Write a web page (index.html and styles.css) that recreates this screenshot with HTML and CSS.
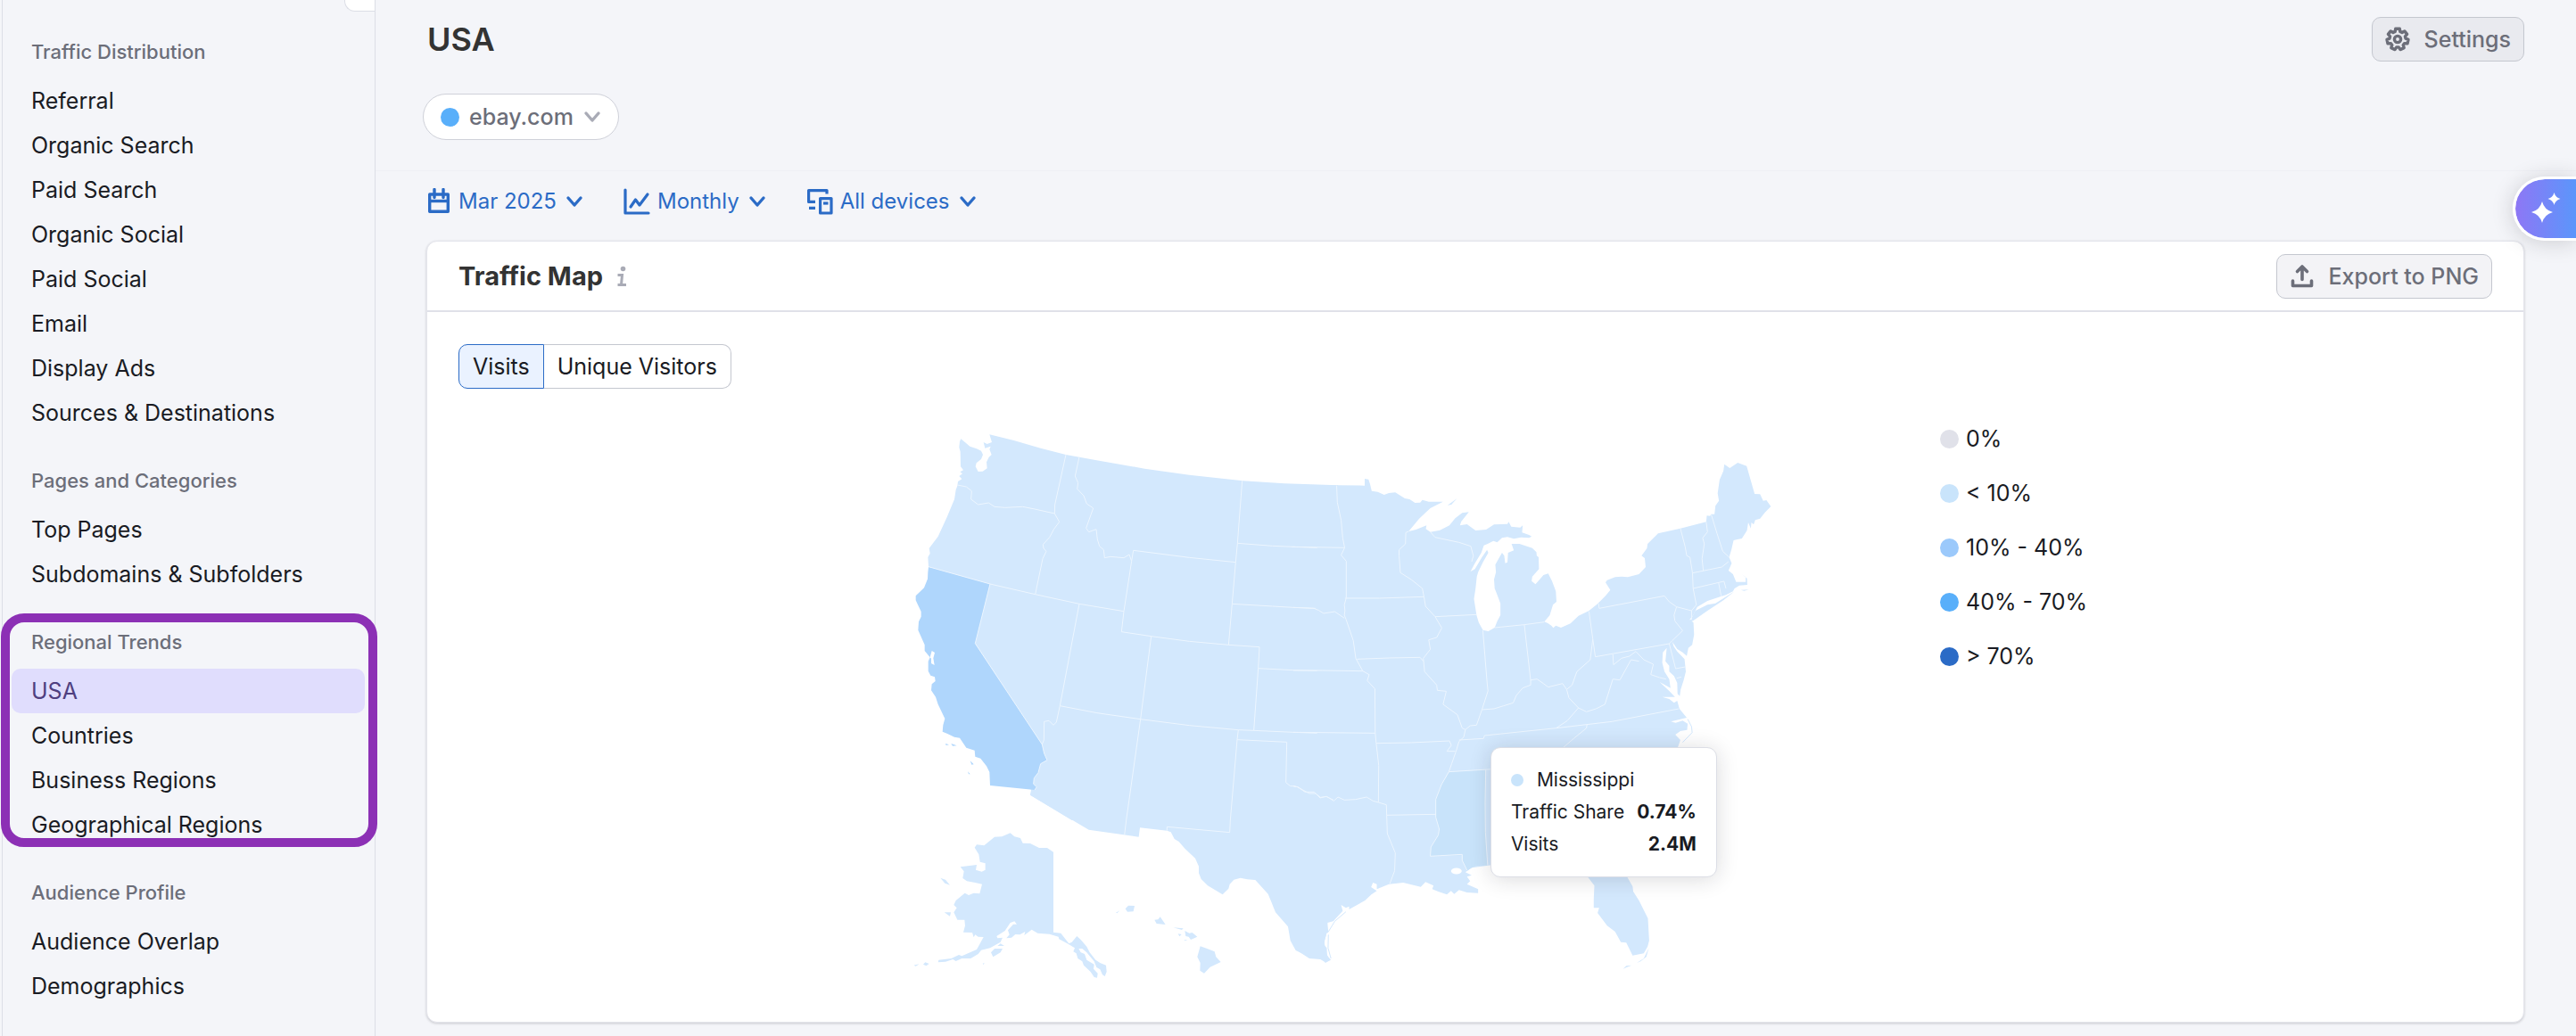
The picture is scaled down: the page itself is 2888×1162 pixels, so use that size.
FILE: index.html
```html
<!DOCTYPE html>
<html lang="en">
<head>
<meta charset="utf-8">
<title>USA – Regional Trends</title>
<link rel="stylesheet" href="styles.css">
</head>
<body>
<div class="app">
  <nav class="sidebar" aria-label="Reports">
    <button class="collapse" type="button" aria-label="Collapse menu"></button>
    <section class="group">
      <h2>Traffic Distribution</h2>
      <a href="#">Referral</a>
      <a href="#">Organic Search</a>
      <a href="#">Paid Search</a>
      <a href="#">Organic Social</a>
      <a href="#">Paid Social</a>
      <a href="#">Email</a>
      <a href="#">Display Ads</a>
      <a href="#">Sources &amp; Destinations</a>
    </section>
    <section class="group">
      <h2>Pages and Categories</h2>
      <a href="#">Top Pages</a>
      <a href="#">Subdomains &amp; Subfolders</a>
    </section>
    <section class="group highlighted">
      <h2>Regional Trends</h2>
      <a href="#" class="active" aria-current="page">USA</a>
      <a href="#">Countries</a>
      <a href="#">Business Regions</a>
      <a href="#">Geographical Regions</a>
    </section>
    <section class="group">
      <h2>Audience Profile</h2>
      <a href="#">Audience Overlap</a>
      <a href="#">Demographics</a>
    </section>
  </nav>

  <main class="main">
    <header class="top">
      <h1>USA</h1>
      <button class="btn btn-settings" type="button">
        <svg class="icon" viewBox="-14 -14 28 28" width="28" height="28" fill="none" stroke="currentColor" stroke-width="3.4" stroke-linejoin="round"><path d="M-2.8-8.6-2.3-11.8 2.3-11.8 2.8-8.6 5-7.5 7.8-9.1 10.6-5.6 8.4-3.2 9-.8 12 .4 11 4.9 7.7 4.6 6.2 6.5 7.2 9.6 3 11.6 1.2 8.9-1.2 8.9-3 11.6-7.2 9.6-6.2 6.5-7.7 4.6-11 4.9-12 .4-9-.8-8.4-3.2-10.6-5.6-7.8-9.1-5-7.5Z"/><circle r="3.6"/></svg>
        <span>Settings</span>
      </button>
    </header>

    <div class="domains">
      <button class="pill" type="button">
        <span class="dot dot-40"></span>
        <span>ebay.com</span>
        <svg class="chevron" viewBox="0 0 20 14" width="20" height="14"><path d="M3 3l7 8 7-8"/></svg>
      </button>
    </div>

    <div class="filters">
      <button class="filter" type="button">
        <svg viewBox="0 0 28 30" width="28" height="30" fill="none" stroke="currentColor" stroke-width="3.4"><path d="M3.7 7h20.600v19.300H3.700Z" stroke-linejoin="round"/><path d="M3 14.500h22"/><path d="M9 1.500v9M19 1.500v9" stroke-linecap="round"/></svg>
        <span>Mar 2025</span>
        <svg class="chevron" viewBox="0 0 20 14" width="20" height="14"><path d="M3 3l7 8 7-8"/></svg>
      </button>
      <button class="filter" type="button">
        <svg viewBox="0 0 30 30" width="30" height="30" fill="none" stroke="currentColor" stroke-width="3.200" stroke-linecap="round" stroke-linejoin="round"><path d="M2 2v26h26"/><path d="M8 21l5.500-8 4.500 6 9-12"/></svg>
        <span>Monthly</span>
        <svg class="chevron" viewBox="0 0 20 14" width="20" height="14"><path d="M3 3l7 8 7-8"/></svg>
      </button>
      <button class="filter" type="button">
        <svg viewBox="0 0 30 30" width="30" height="30" fill="none" stroke="currentColor" stroke-width="3.200"><path d="M23 6.500V2.600H2.600V15.400H10M3 22.400H10" stroke-linejoin="round"/><path d="M15.600 11.600h12.400v16.400H15.600Z" stroke-linejoin="round"/><path d="M19 17h5.500"/></svg>
        <span>All devices</span>
        <svg class="chevron" viewBox="0 0 20 14" width="20" height="14"><path d="M3 3l7 8 7-8"/></svg>
      </button>
    </div>

    <section class="card">
      <header class="card-head">
        <h2>Traffic Map</h2>
        <svg class="info" viewBox="0 0 12 24" width="12" height="24" fill="none" stroke="currentColor" stroke-width="3"><circle cx="7.500" cy="3.500" r="2.800" fill="currentColor" stroke="none"/><path d="M1.500 10.500H6.500L5.500 21.500M1.500 21.500H11"/></svg>
        <button class="btn btn-export" type="button">
          <svg class="icon" viewBox="0 0 28 28" width="28" height="28" fill="none" stroke="currentColor" stroke-width="3.600" stroke-linejoin="round" stroke-linecap="round"><path d="M3.500 19v5.500h21V19"/><path d="M14 17.500V4M8.500 8.500L14 3l5.500 5.500"/></svg>
          <span>Export to PNG</span>
        </button>
      </header>
      <div class="tabs">
        <button class="tab selected" type="button" aria-pressed="true">Visits</button>
        <button class="tab" type="button" aria-pressed="false">Unique Visitors</button>
      </div>
      <div class="map-row">
        <div class="map">
          <svg viewBox="1025 476 964 624" role="img" aria-label="Traffic by state">
            <g class="land">
              <path transform="translate(1000 460) scale(.33333)" d="M232 97L250 112 262 122 285 130 300 137 306 150 300 165 284 178 281 190 290 207 305 206 320 196 318 175 326 158 335 150 328 132 332 122 313 128 308 108 320 114 336 108 328 82 410 102 500 128 585 150 680 167 850 197 1000 218 1180 238 1320 247 1500 253V1380H605L465 1295 468 1278 200 800V560L123 527 121 495 128 482 125 465 155 425 185 360 210 300 215 268 220 255 222 240 235 232 226 222 237 214 229 208 240 202 231 190 230 140 226 125 228 105Z"/>
              <path transform="translate(1450 460) scale(.35714 .33333)" d="M0 251L224 254V231L236 233 241 250 246 272 265 275 285 285 300 279 320 277 350 297 365 300 382 312 398 311 405 302 425 308 470 308 430 330 395 365 362 408 385 402 418 388 416 400 430 410 460 404 490 388 508 364 530 346 551 343 527 375 523 388 545 384 572 405 605 402 630 385 672 383 676 376 684 392 712 395 720 388 718 412 740 420 748 425 740 430 715 428 692 433 672 427 655 430 640 445 628 440 610 450 598 455 590 480 570 515 556 543 570 535 592 495 608 470 612 480 596 510 580 545 576 560 572 600 567 635 575 690 582 715 595 740 612 744 632 732 640 710 650 690V650L640 622 632 600 630 570 636 545 634 520 655 480 662 490 665 515 672 512 674 480 692 472 685 450 710 450 750 464 763 478 764 490 770 495 771 535 750 560 748 575 760 586 775 568 785 555 800 550 812 575 824 610 826 645 815 655 805 690 788 712 800 718 810 725 816 733 824 725 840 732 870 718 895 692 928 675 955 652 980 625 995 605 980 580 985 572 1010 562 1030 560 1050 562 1085 552 1106 528 1103 498 1093 490 1110 465 1112 450 1145 415 1215 398 1296 376 1298 355 1308 356 1311 350 1322 350 1325 322 1336 305 1332 280 1338 235 1350 205 1353 182 1370 195 1395 177 1423 188 1448 282 1465 283 1475 305 1485 303 1499 324 1480 345 1465 365 1450 370 1445 385 1438 378 1436 398 1428 378 1424 405 1408 432 1394 435 1382 438 1375 470 1368 495 1376 515 1366 540 1380 552 1390 578 1420 578 1420 562 1408 553 1424 566 1425 588 1400 590 1385 600 1380 610 1358 622 1340 628 1300 642 1268 662 1255 690 1244 705 1256 715 1258 755 1252 790 1240 800 1235 827 1222 815 1205 804 1190 780 1194 795 1205 812 1228 838 1232 880 1225 910 1216 940 1213 962 1206 955 1205 918 1195 895 1180 880 1180 860 1168 845 1172 800 1160 815 1158 850 1165 880 1180 905 1184 935 1150 915 1180 945 1198 965 1158 965 1180 972 1195 985 1205 978 1212 1005 1235 1035 1185 1048 1200 1052 1222 1045 1238 1055 1236 1076 1215 1080 1199 1092 1215 1110 1205 1140 1000 1380H0Z"/>
              <path transform="translate(1450 460) scale(.35714 .33333)" d="M484 320L514 297 496 318ZM1250 700L1262 675 1300 655 1325 650 1385 610 1350 640 1300 675 1256 708 1242 714ZM1405 605L1430 604 1415 608Z"/>
              <path transform="translate(1000 860) scale(.33333)" d="M465 95L662 212 830 236 834 205 925 215 938 220 950 243 965 252 985 275 1020 308 1032 335 1032 358 1040 378 1062 400 1112 430 1132 410 1136 395 1150 380 1172 374 1195 379 1222 381 1265 428 1278 460 1290 490 1332 538 1340 585 1358 618 1410 643 1445 645 1458 660 1472 652 1460 625 1454 590 1462 560 1465 520 1485 518 1500 500V0H495L476 60Z"/>
              <path transform="translate(1450 800) scale(.35714 .33333)" d="M0 780L15 800 50 825 85 828 100 838 118 830 106 815 105 790 97 780 98 765 103 745 92 744 110 738 107 705 125 700 155 665 150 645 165 655 175 650 175 660 225 630 245 610 262 598 244 585 250 570 262 575 262 592 300 575 345 570 400 584 415 568 440 580 436 592 455 600 482 610 495 598 505 608 520 595 545 603 580 605 580 592 545 575 555 565 545 550 560 545 540 535 560 520 612 512 640 508V0H0ZM920 545L945 580 943 625 943 655 960 655 955 672 985 715 1010 735 1028 770 1045 772 1065 815 1100 808 1112 785 1117 765 1113 690 1085 630 1067 600 1065 583 1045 545ZM1035 860L1045 850 1062 848 1046 855ZM1078 840L1100 825 1116 790 1108 820 1090 835Z"/>
              <path transform="translate(1000 860) scale(.33333)" d="M398 223L412 235 432 240 440 257 465 258 495 273 522 273 543 287V557L568 560 595 595 605 590 622 570 635 582 655 605 665 625 685 650 700 660 720 668 722 690 716 705 708 700 700 682 688 675 680 655 655 625 640 612 628 612 635 625 648 630 655 650 680 665 678 680 692 695 690 710 680 708 668 690 645 668 640 655 625 645 620 628 610 622 615 610 590 595 562 580 560 572 530 563 490 560 470 548 445 567 448 555 430 565 415 564 402 575 385 577 395 565 390 550 408 530 420 530 412 520 398 525 380 552 352 570 355 577 372 575 365 590 330 610 300 617 290 630 265 645 235 645 215 654 205 648 180 656 155 658 157 650 200 645 225 633 235 637 285 615 295 597 308 573 290 572 280 565 275 574 270 558 240 557 246 535 244 515 220 515 208 490 218 475 208 465 215 450 245 425 258 432 275 425 295 427 303 395 280 390 252 385 238 375 242 352 230 337 285 330 282 347 302 353 314 347 314 325 296 320 292 295 278 272 285 262 310 265 345 236 370 235ZM163 374L180 380 195 398 178 392ZM176 490L198 490 195 503ZM333 625L345 612 372 612 365 625 340 640ZM355 603L365 595 378 603ZM73 668L92 664 80 671ZM105 665L112 658 125 663 115 670ZM305 662L311 660 308 666ZM785 478L795 467 816 468 812 487 792 488ZM753 491L766 484 757 493ZM883 515L895 514 902 505 920 531 890 528ZM946 541L980 544 975 549ZM985 552L1000 560 1010 558 1027 572 1005 582 998 572 988 570ZM962 562L974 564 967 571ZM982 583L994 583 986 586ZM1037 604L1060 612 1085 622 1090 640 1106 657 1070 674 1050 695 1036 686 1037 660 1027 640Z"/>
            </g>
            <g class="water">
              <ellipse cx="1632.800" cy="977" rx="6" ry="3.500"/>
            </g>
            <path class="mid" transform="translate(1000 460) scale(.33333)" d="M123 527L330 585 280 785 505 1125 512 1155 522 1178 500 1190 492 1220 478 1238 476 1258 487 1268 480 1278 330 1263 328 1218 318 1198 298 1172 280 1166 278 1145 250 1136 228 1103 210 1100 185 1088 170 1082 172 1060 178 1038 155 990 147 965 132 943 134 922 146 912 144 898 130 893 122 878 122 845 128 832 110 810V790L88 740 90 712 98 695V678L80 640V625L108 598 120 568 121 545ZM180 1122L192 1126 182 1128ZM199 1122L218 1129 204 1130ZM263 1180L275 1192 268 1193ZM255 1216L263 1225 258 1225Z"/>
            <path class="water" transform="translate(1000 460) scale(.33333)" d="M128 832L134 810 144 816 139 835 143 858 132 852 132 836Z"/>
            <path class="hover" transform="translate(1450 800) scale(.35714 .33333)" d="M490 197L604 190 602 300 603 400 610 512 575 513 560 520 545 530 530 495V478L430 481 432 450 455 410 458 390 447 350 447 290 465 240Z"/>
            <g class="borders">
              <path transform="translate(1000 460) scale(.33333)" d="M585 150L548 318 547 348M630 157L616 222 626 245 623 265 645 288 655 315 677 330 653 397 662 410 687 401 691 435 698 458 712 470 715 497 735 493 780 497 798 486 806 508M220 252L250 258 268 272 266 300 290 318 325 312 345 325 380 328 440 325 480 333 547 348 563 376 545 400 530 428 508 452 510 465 519 475 507 500 482 620M123 527L330 585 482 620 630 652 780 677M330 585L280 785 505 1125 512 1155 522 1178 500 1190 492 1220 478 1238 476 1258 487 1268 480 1278M630 652L565 995 553 1050 543 1060 528 1045 512 1048 511 1110 505 1125M812 472L806 508 780 677 772 746 872 761 836 1040 788 1380M812 472L1000 496 1156 512M1178 238L1162 448 1156 512 1144 652 1132 790M872 761L1000 778 1132 790 1236 797 1232 869 1217 1078M1162 448L1280 457 1350 460M1144 652L1280 660 1350 664M1232 869L1350 875M565 995L690 1019 836 1040 1000 1061 1165 1076 1217 1078 1350 1084M1165 1076L1161 1109 1138 1380M1161 1109L1328 1117 1325 1253 1340 1265 1350 1265"/>
              <path transform="translate(1450 460) scale(.35714 .33333)" d="M136 254L138 310 150 370 155 430 161 463 150 488 166 508V632M0 460L161 463M162 633H270L410 628M362 408L353 412 352 450 332 470V490L336 547 370 570 405 600 410 628M166 632L160 655 162 675 160 690 165 703 188 775 196 835 218 878 238 890 232 910 256 938 257 1086 260 1120 268 1195 267 1320M0 664L65 667 80 674 95 684 130 678 160 700M410 628L415 660 445 695 466 733 450 765 425 773 430 805 408 835 412 880 450 925 452 943 480 946 470 990 515 1025 530 1070 540 1075 535 1100 520 1115 510 1150 497 1190 488 1217M445 695L575 688M200 838L300 834 398 832 408 845M0 876L90 876 218 878M0 1084L257 1087M260 1121L370 1119 490 1113 496 1128 482 1148H508M430 410L445 428 520 445 557 458 565 490 560 510M595 742L608 915 611 945 592 1008M632 732L725 722 788 713M725 722L745 910M540 1075L555 1062 575 1060 592 1008 630 1005 660 995 690 985 700 960 720 935 745 925V908L765 905 785 920 800 932 845 920 858 940 875 925 890 880 932 840 940 770 928 677M940 770L948 830 1180 786 1190 775 1222 742 1198 710 1195 690 1203 662 1250 675M958 650L960 667 1165 625 1180 645 1203 662M858 940L865 968 895 1002 920 1015 950 1005 978 990 1003 905 1025 908 1060 840 1085 845M1003 822L1005 857 1030 835 1055 828 1075 812 1100 840 1130 855 1122 890 1150 900 1170 905M895 1002L860 1045 825 1070 600 1095 597 1105 520 1110M825 1070L1000 1048 1210 1005M922 1057L920 1070 880 1105 840 1142M488 1217L626 1208M1180 786L1200 870 1230 864M1203 902L1218 898M1215 398L1230 460 1235 490 1245 495 1253 548 1255 600 1265 655 1250 675V705M1296 376L1300 410 1285 430 1290 450 1283 500 1287 541M1312 352L1330 415 1348 475 1368 495M1253 548L1345 528 1366 510M1255 600L1352 576 1358 600M1335 581L1343 626"/>
              <path transform="translate(1000 860) scale(.33333)" d="M788 180L782 230M1138 180L1136 221 925 202V215"/>
              <path transform="translate(1450 800) scale(.35714 .33333)" d="M0 245L12 248 25 255 50 270 70 270 85 283 105 280 127 295 140 282 160 292 195 290 230 282 250 295 267 300 292 308 293 343 447 340M293 343L295 405 320 470 318 530 303 573M604 190L602 300 603 400 610 512M488 197L465 240 447 290V350L458 390 455 410 432 450 430 481 530 475V495L545 528"/>
              <path transform="translate(1000 460) scale(.33333)" d="M1345 460L1355 460M1350 1265L1365 1268 1390 1285"/>
            </g>
            <path class="banks" transform="translate(1450 460) scale(.35714 .33333)" d="M1238 1040L1250 1065 1252 1085 1222 1118"/>
            <path class="banks" transform="translate(1450 800) scale(.35714 .33333)" d="M110 735L130 700 165 668M110 745L109 790 118 825"/>
            <path class="border-line" transform="translate(1000 460) scale(.33333)" d="M1350 460L1430 463M1350 664L1425 667M1350 875L1430 877M1350 1084L1430 1087M1350 1265L1365 1268 1390 1285 1420 1285 1440 1305 1460 1300 1485 1312"/>
          </svg>
          <div class="tooltip" role="tooltip">
            <p class="tip-title"><span class="dot dot-tip"></span>Mississippi</p>
            <p class="tip-line"><span>Traffic Share</span><strong>0.74%</strong></p>
            <p class="tip-line"><span>Visits</span><strong>2.4M</strong></p>
          </div>
        </div>
        <ul class="legend">
          <li><span class="dot dot-0"></span>0%</li>
          <li><span class="dot dot-1"></span>&lt; 10%</li>
          <li><span class="dot dot-10"></span>10% - 40%</li>
          <li><span class="dot dot-40"></span>40% - 70%</li>
          <li><span class="dot dot-70"></span>&gt; 70%</li>
        </ul>
      </div>
    </section>
  </main>
</div>
<button class="assistant" type="button" aria-label="Open assistant">
  <svg viewBox="0 0 36 36" width="36" height="36" fill="#fff"><path d="M13 10Q15.500 19.500 25 22 15.500 24.500 13 34 10.500 24.500 1 22 10.500 19.500 13 10ZM26.500 0Q28 5.500 33.500 7 28 8.500 26.500 14 25 8.500 19.500 7 25 5.500 26.500 0Z"/></svg>
</button>
</body>
</html>
```
FILE: styles.css
```css
* {
  box-sizing: border-box;
}

body {
  margin: 0;
  background: #f4f5f9;
  color: #191b23;
  font-family: Inter, "Liberation Sans", sans-serif;
  font-size: 25px;
  line-height: 32px;
}

h1, h2, p, ul {
  margin: 0;
  padding: 0;
}

button {
  margin: 0;
  font: inherit;
  color: inherit;
  cursor: pointer;
}

svg {
  display: block;
  flex: none;
}

.app {
  display: flex;
  min-height: 100vh;
}

/* Sidebar */

.sidebar {
  position: relative;
  flex: none;
  display: flex;
  flex-direction: column;
  gap: 36px;
  width: 419px;
  margin-left: 2px;
  padding: 43px 11px 30px 10px;
  border-left: 1px solid #dcdee6;
  border-right: 1px solid #dcdee6;
}

.collapse {
  position: absolute;
  top: -40px;
  right: 0;
  width: 34px;
  height: 53px;
  padding: 0;
  background: #fff;
  border: 1px solid #dcdee6;
  border-right: 0;
  border-radius: 12px 0 0 12px;
}

.group {
  position: relative;
  display: flex;
  flex-direction: column;
}

.group h2 {
  margin-bottom: 15px;
  padding: 0 22px;
  font-size: 22px;
  line-height: 30px;
  font-weight: 500;
  color: #6c6e79;
}

.group a {
  height: 50px;
  padding: 0 22px;
  border-radius: 10px;
  line-height: 50px;
  color: #191b23;
  text-decoration: none;
}

.group .active {
  background: #e0ddfd;
  color: #4f3f80;
}

.highlighted::after {
  content: "";
  position: absolute;
  inset: -17px -14px 0 -12px;
  border: 10px solid #8c30b5;
  border-radius: 26px;
  pointer-events: none;
}

/* Main column */

.main {
  flex: 1;
  min-width: 0;
}

.top {
  display: flex;
  align-items: center;
  justify-content: space-between;
  padding: 19px 58px 0;
}

.top h1 {
  font-size: 36px;
  line-height: 44px;
  font-weight: 600;
  color: #333;
}

.btn {
  display: flex;
  align-items: center;
  gap: 16px;
  height: 50px;
  padding: 0 14px;
  background: #f3f3f6;
  border: 1px solid #c4c7cf;
  border-radius: 10px;
  font-weight: 500;
  color: #6c6e79;
}

.btn-settings {
  background: #e9eaef;
}

.domains {
  padding: 36px 53px 34px;
  border-bottom: 1px solid #eff0f5;
}

.pill {
  display: flex;
  align-items: center;
  gap: 11px;
  height: 52px;
  padding: 0 19px;
  background: #fff;
  border: 1px solid #cfd1d9;
  border-radius: 26px;
  font-weight: 500;
  color: #6c6e79;
}

.chevron {
  fill: none;
  stroke: currentColor;
  stroke-width: 3.4;
  stroke-linecap: round;
  stroke-linejoin: round;
}

.pill .chevron {
  color: #a9abb6;
}

.dot {
  flex: none;
  width: 21px;
  height: 21px;
  border-radius: 50%;
}

.dot-0 { background: #e0e1e9; }
.dot-1 { background: #c9e4fb; }
.dot-10 { background: #9bc9fb; }
.dot-40 { background: #59affa; }
.dot-70 { background: #2b6bc6; }

.filters {
  display: flex;
  gap: 45px;
  height: 68px;
  padding: 0 57px;
  font-size: 24px;
}

.filter {
  display: flex;
  align-items: center;
  gap: 8px;
  padding: 0;
  background: none;
  border: 0;
  color: #2b6bc6;
}

.filter .chevron {
  margin-left: 2px;
}

/* Traffic map card */

.card {
  margin: 10px 58px 16px 57px;
  background: #fff;
  border: 1px solid #e4e5ec;
  border-radius: 12px;
  box-shadow: 0 1px 3px rgba(25, 27, 35, .2);
}

.card-head {
  display: flex;
  align-items: center;
  height: 79px;
  padding: 0 35px;
  border-bottom: 2px solid #e0e1e9;
}

.card-head h2 {
  font-size: 29px;
  line-height: 36px;
  font-weight: 700;
  color: #333;
}

.info {
  margin-left: 15px;
  color: #a9abb6;
}

.btn-export {
  margin-left: auto;
}

.tabs {
  display: flex;
  margin: 36px 35px 40px;
}

.tab {
  height: 50px;
  padding: 0 15px;
  background: #fff;
  border: 1px solid #c4c7cf;
  border-left: 0;
  border-radius: 0 10px 10px 0;
}

.tab.selected {
  background: #eaf2ff;
  border: 1px solid #2b6bc6;
  border-radius: 10px 0 0 10px;
}

.map-row {
  display: grid;
  grid-template-columns: 546fr 964fr 186fr 654fr;
  padding-bottom: 46px;
}

.map {
  grid-column: 2;
  position: relative;
}

.map > svg {
  width: 100%;
}

.land { fill: #d3e8fd; }
.mid { fill: #afd6fc; }
.hover { fill: #c8e3fa; }
.water { fill: #fff; }

.borders path,
.border-line {
  fill: none;
  stroke: #edf6ff;
  stroke-width: 1px;
  vector-effect: non-scaling-stroke;
}

.banks {
  fill: none;
  stroke: #d3e8fd;
  stroke-width: 1px;
  vector-effect: non-scaling-stroke;
}

.tooltip {
  position: absolute;
  left: 67%;
  top: 58%;
  width: 254px;
  padding: 18px 22px;
  background: #fff;
  border: 1px solid #dcdee6;
  border-radius: 11px;
  box-shadow: 0 2px 24px rgba(25, 27, 35, .16);
  font-size: 21px;
  line-height: 36px;
}

.tip-title {
  display: flex;
  align-items: center;
  gap: 15px;
}

.tip-line {
  display: flex;
  justify-content: space-between;
}

.dot-tip {
  width: 14px;
  height: 14px;
  background: #c9e4fb;
}

.legend {
  grid-column: 4;
  display: flex;
  flex-direction: column;
  gap: 29px;
  list-style: none;
}

.legend li {
  display: flex;
  align-items: center;
  gap: 8px;
}

/* Assistant launcher */

.assistant {
  position: fixed;
  top: 198px;
  right: 0;
  width: 71px;
  height: 72px;
  padding: 0 0 0 17px;
  background: linear-gradient(90deg, #8e77f5, #5b96fb) padding-box;
  border: 3px solid #fff;
  border-right: 0;
  border-radius: 36px 0 0 36px;
  box-shadow: 0 2px 24px rgba(25, 27, 35, .18);
}
```
